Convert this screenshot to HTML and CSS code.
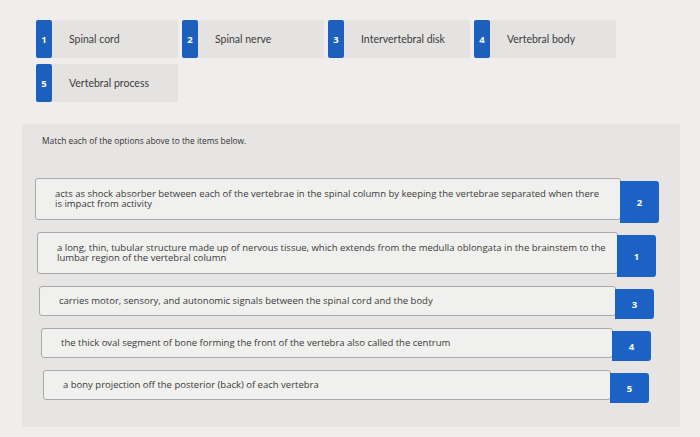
FILE: index.html
```html
<!DOCTYPE html>
<html lang="en">
<head>
<meta charset="utf-8">
<title>Match the terms</title>
<link rel="stylesheet" href="styles.css">
</head>
<body>
<div class="page">
  <div class="options">
    <div class="chip"><span class="badge">1</span><span class="chip-label">Spinal cord</span></div>
    <div class="chip"><span class="badge">2</span><span class="chip-label">Spinal nerve</span></div>
    <div class="chip"><span class="badge">3</span><span class="chip-label">Intervertebral disk</span></div>
    <div class="chip"><span class="badge">4</span><span class="chip-label">Vertebral body</span></div>
    <div class="chip"><span class="badge">5</span><span class="chip-label">Vertebral process</span></div>
  </div>

  <div class="panel">
    <p class="prompt">Match each of the options above to the items below.</p>
    <div class="items">
      <div class="item">
        <div class="item-text">acts as shock absorber between each of the vertebrae in the spinal column by keeping the vertebrae separated when there is impact from activity</div>
        <div class="answer">2</div>
      </div>
      <div class="item">
        <div class="item-text">a long, thin, tubular structure made up of nervous tissue, which extends from the medulla oblongata in the brainstem to the lumbar region of the vertebral column</div>
        <div class="answer">1</div>
      </div>
      <div class="item">
        <div class="item-text">carries motor, sensory, and autonomic signals between the spinal cord and the body</div>
        <div class="answer">3</div>
      </div>
      <div class="item">
        <div class="item-text">the thick oval segment of bone forming the front of the vertebra also called the centrum</div>
        <div class="answer">4</div>
      </div>
      <div class="item">
        <div class="item-text">a bony projection off the posterior (back) of each vertebra</div>
        <div class="answer">5</div>
      </div>
    </div>
  </div>
</div>
</body>
</html>
```

FILE: styles.css
```css
* {
  box-sizing: border-box;
}

html, body {
  margin: 0;
  padding: 0;
}

body {
  width: 700px;
  height: 437px;
  overflow: hidden;
  background: #efeeec;
  font-family: "Open Sans", "Liberation Sans", sans-serif;
  color: #3a3a3a;
}

.page {
  padding-top: 20px;
}

/* option chips: blue number tab + grey label */
.options {
  display: grid;
  grid-template-columns: repeat(4, 142px);
  column-gap: 4px;
  row-gap: 6px;
  padding-left: 36px;
}

.chip {
  display: flex;
  height: 38px;
}

.badge {
  width: 16px;
  flex: none;
  display: flex;
  align-items: center;
  justify-content: center;
  background: #1d5fbd;
  color: #fff;
  font-weight: 700;
  font-size: 9.5px;
  border-radius: 2px;
}

.chip-label {
  flex: 1;
  display: flex;
  align-items: center;
  padding-left: 17px;
  background: #e4e3e1;
  font-family: "Lato", "Open Sans", sans-serif;
  font-size: 10.5px;
  color: #3c3c3c;
}

/* matching area */
.panel {
  margin: 22px 20px 0 22px;
  height: 303px;
  background: #e6e5e3;
  padding: 11px 0 0 20px;
}

.prompt {
  margin: 0;
  font-size: 8.4px;
  color: #333;
}

.items {
  display: flex;
  flex-direction: column;
  gap: 12px;
  margin-top: 32px;
  width: 624px;
  margin-left: -7px;
}

.item {
  display: flex;
  align-items: stretch;
}

/* rows drift slightly inward further down the list */
.item:nth-child(2) { margin: 0 3px 0 2px; }
.item:nth-child(3) { margin: 0 5px 0 4px; }
.item:nth-child(4) { margin: 0 8px 0 6px; }
.item:nth-child(5) { margin: 0 10px 0 8px; }

.item-text {
  flex: 1;
  display: flex;
  align-items: center;
  padding: 5px 12px 5px 19px;
  background: #f0f0ee;
  border: 1px solid #a9a9ab;
  border-radius: 3px;
  font-size: 9.5px;
  line-height: 9.6px;
  color: #3a3a3a;
  min-height: 30px;
}

.item:nth-child(-n+2) .item-text {
  min-height: 42px;
}

.item:nth-child(2) .item-text {
  padding-right: 5px;
}

.answer {
  width: 39px;
  flex: none;
  margin: 3px 0 -3px -1px;
  display: flex;
  align-items: center;
  justify-content: center;
  background: #1c62c5;
  color: #fff;
  font-weight: 700;
  font-size: 9.5px;
  border-radius: 0 3px 3px 0;
}
```
